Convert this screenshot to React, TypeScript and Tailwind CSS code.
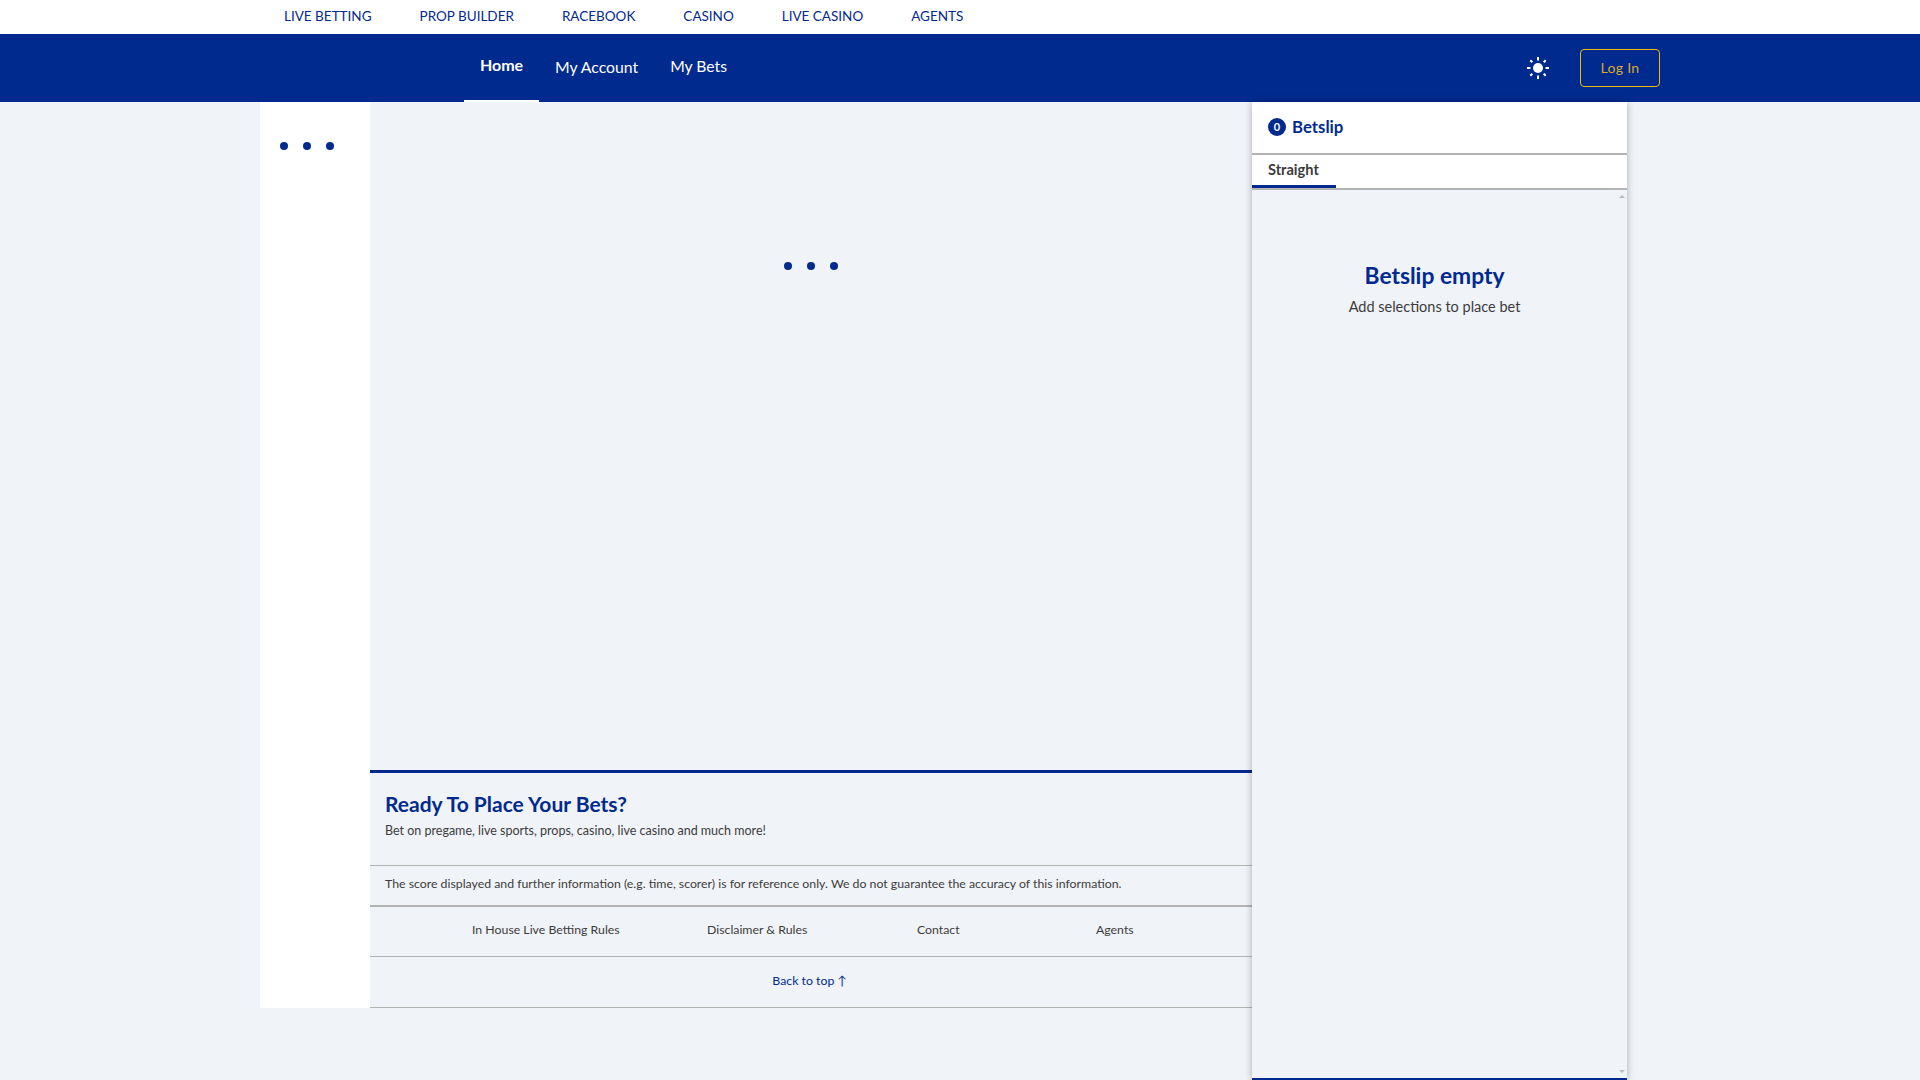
import React from "react";

function Dots({ className }: { className: string }) {
  return (
    <div className={`flex gap-[15px] ${className}`}>
      <span className="h-2 w-2 rounded-full bg-[#012a8f]" />
      <span className="h-2 w-2 rounded-full bg-[#012a8f]" />
      <span className="h-2 w-2 rounded-full bg-[#012a8f]" />
    </div>
  );
}

function SunIcon() {
  return (
    <svg width="22" height="22" viewBox="0 0 22 22" fill="none" stroke="#fff" strokeWidth="2" aria-hidden="true">
      <circle cx="11" cy="11" r="5" fill="#fff" stroke="none" />
      <path d="M11 0v3.500M11 18.500v3.500M0 11h3.500M18.500 11h3.500M3.300 3.300l2 2M16.700 16.700l2 2M3.300 18.700l2-2M16.700 5.300l2-2" />
    </svg>
  );
}

export default function App() {
  return (
    <div className="flex h-screen flex-col overflow-hidden bg-[#f0f3f8] font-['Lato','Liberation_Sans',sans-serif]">
      <div className="flex h-[34px] shrink-0 items-center gap-12 bg-white pb-[2px] pl-[284px] text-[13.5px] text-[#012a8f]">
        <span>LIVE BETTING</span>
        <span>PROP BUILDER</span>
        <span>RACEBOOK</span>
        <span>CASINO</span>
        <span>LIVE CASINO</span>
        <span>AGENTS</span>
      </div>

      <div className="flex h-[68px] shrink-0 items-center bg-[#012a8f] pl-[464px] pr-[260px] text-white">
        <span className="flex h-full w-[75px] items-center justify-center border-b-2 border-white pb-[4px] text-[16px] font-bold">
          Home
        </span>
        <span className="mb-[2px] ml-[16px] text-[15.8px]">My Account</span>
        <span className="mb-[2px] ml-8 text-[15.7px]">My Bets</span>
        <div className="ml-auto flex items-center">
          <SunIcon />
          <button className="ml-[31px] h-[38px] w-20 rounded border border-[#f0b90b] pb-[2px] text-[14px] tracking-[0.3px] text-[#d9a92c]">
            Log In
          </button>
        </div>
      </div>

      <div className="flex min-h-0 flex-1 pl-[260px]">
        <aside className="h-[906px] w-[110px] shrink-0 bg-white pl-5 pt-10">
          <Dots className="" />
        </aside>

        <main className="flex w-[882px] shrink-0 flex-col">
          <div className="flex h-[668px] shrink-0 justify-center pt-[160px]">
            <Dots className="h-2" />
          </div>
          <div className="h-[96px] border-t-[3px] border-b border-t-[#012a8f] border-b-[#b3b3b3] px-[15px] pt-[17px]">
            <h2 className="text-[21px] font-bold leading-[28px] text-[#012a8f]">Ready To Place Your Bets?</h2>
            <p className="mt-[5px] text-[12.5px] leading-[16px] text-[#3c3c3c]">
              Bet on pregame, live sports, props, casino, live casino and much more!
            </p>
          </div>
          <div className="flex h-[41px] items-center border-b-2 border-[#b3b3b3] px-[15px] pb-[2px] text-[12.3px] text-[#3c3c3c]">
            The score displayed and further information (e.g. time, scorer) is for reference only. We do not guarantee
            the accuracy of this information.
          </div>
          <div className="flex h-[50px] items-center border-b border-[#b3b3b3] pb-[2px] pl-[102px] text-[12.3px] text-[#3c3c3c]">
            <span className="w-[147px] whitespace-nowrap text-center">In House Live Betting Rules</span>
            <span className="ml-[88px] w-[100px] whitespace-nowrap text-center">Disclaimer &amp; Rules</span>
            <span className="ml-[110px] w-[42px] text-center">Contact</span>
            <span className="ml-[137px] w-[37px] text-center">Agents</span>
          </div>
          <div className="flex h-[51px] items-center justify-center border-b border-[#b3b3b3] pb-[2px] pr-[3px] text-[12.3px] text-[#012a8f]">
            Back to top ↑
          </div>
        </main>

        <aside className="relative z-10 flex h-[978px] w-[375px] shrink-0 flex-col border-b-2 border-[#012a8f] shadow-[0_0_7px_rgba(0,0,0,0.3)]">
          <div className="flex h-[53px] shrink-0 items-center gap-[6px] border-b-2 border-[#b3b3b3] bg-white pb-[1px] pl-4">
            <span className="flex h-[18px] w-[18px] items-center justify-center rounded-full bg-[#012a8f] text-[11px] font-bold text-white">
              0
            </span>
            <span className="text-[16.800px] font-bold text-[#012a8f]">Betslip</span>
          </div>
          <div className="flex h-[35px] shrink-0 border-b-2 border-[#b3b3b3] bg-white">
            <span className="flex h-[33px] w-[84px] items-center border-b-[3px] border-[#012a8f] pl-4 text-[14.600px] font-bold text-[#3c3c3c]">
              Straight
            </span>
          </div>
          <div className="relative flex-1 pr-[10px] pt-[71px] text-center">
            <h3 className="text-[22.800px] font-bold leading-[28px] text-[#012a8f]">Betslip empty</h3>
            <p className="mt-[8px] text-[14.500px] leading-[20px] text-[#3c3c3c]">Add selections to place bet</p>
            <span className="absolute right-[2px] top-[5px] h-0 w-0 border-x-[3px] border-b-[3px] border-x-transparent border-b-[#bbb]" />
            <span className="absolute bottom-[5px] right-[2px] h-0 w-0 border-x-[3px] border-t-[3px] border-x-transparent border-t-[#bbb]" />
          </div>
        </aside>
      </div>
    </div>
  );
}
